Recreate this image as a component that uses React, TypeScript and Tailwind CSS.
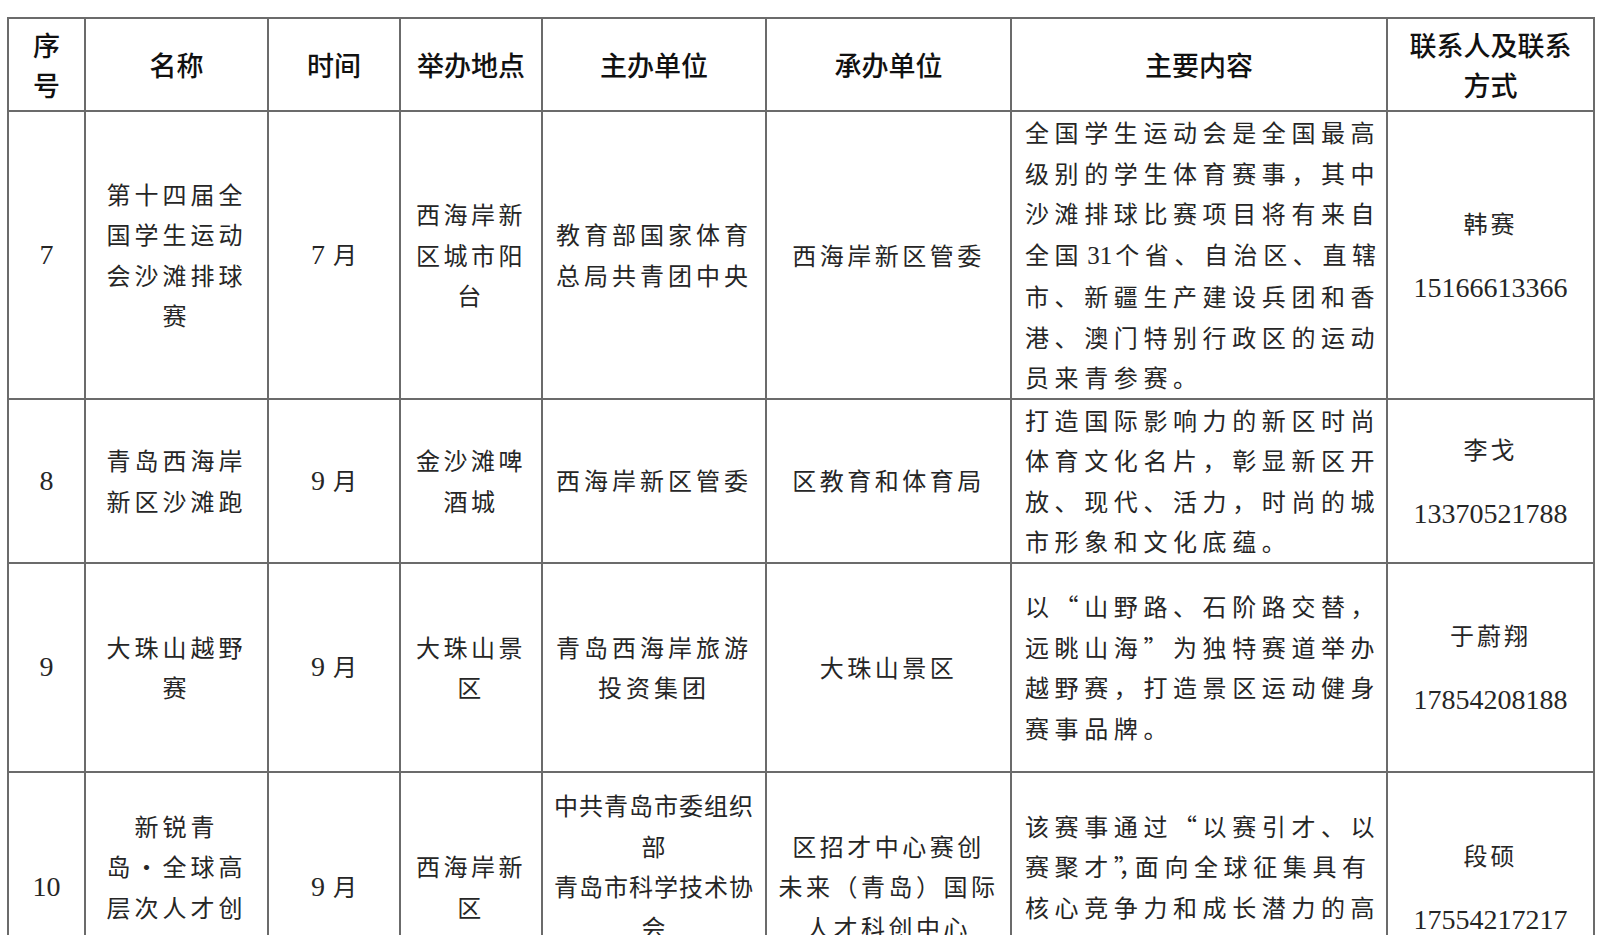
import type { ReactNode } from "react";

const cjk = "font-['Noto_Sans_CJK_SC',sans-serif]";
const num = "font-['Liberation_Serif',serif]";

type Row = {
  no: string;
  name: ReactNode[];
  month: string;
  place: string[];
  host: string[];
  hostTrack: string;
  org: string[];
  content: ReactNode[];
  person: string;
  phone: string;
  h: string;
};

const N = ({ children }: { children: ReactNode }) => (
  <span className={`${num} text-[25px] tracking-normal mx-[3px]`}>{children}</span>
);

// squeezed punctuation pair, so a 13-glyph line keeps the 12-glyph width
const P = ({ children }: { children: ReactNode }) => (
  <span className="tracking-[-7.5px]">{children}</span>
);

const rows: Row[] = [
  {
    no: "7",
    name: ["第十四届全", "国学生运动", "会沙滩排球", "赛"],
    month: "7",
    place: ["西海岸新", "区城市阳", "台"],
    host: ["教育部国家体育", "总局共青团中央"],
    hostTrack: "tracking-[4px]",
    org: ["西海岸新区管委"],
    content: [
      "全国学生运动会是全国最高",
      "级别的学生体育赛事，其中",
      "沙滩排球比赛项目将有来自",
      <>
        全国<N>31</N>个省、自治区、直辖
      </>,
      "市、新疆生产建设兵团和香",
      "港、澳门特别行政区的运动",
      "员来青参赛。",
    ],
    person: "韩赛",
    phone: "15166613366",
    h: "h-[285px]",
  },
  {
    no: "8",
    name: ["青岛西海岸", "新区沙滩跑"],
    month: "9",
    place: ["金沙滩啤", "酒城"],
    host: ["西海岸新区管委"],
    hostTrack: "tracking-[4px]",
    org: ["区教育和体育局"],
    content: [
      "打造国际影响力的新区时尚",
      "体育文化名片，彰显新区开",
      "放、现代、活力，时尚的城",
      "市形象和文化底蕴。",
    ],
    person: "李戈",
    phone: "13370521788",
    h: "h-[162px]",
  },
  {
    no: "9",
    name: ["大珠山越野", "赛"],
    month: "9",
    place: ["大珠山景", "区"],
    host: ["青岛西海岸旅游", "投资集团"],
    hostTrack: "tracking-[4px]",
    org: ["大珠山景区"],
    content: [
      "以“山野路、石阶路交替，",
      "远眺山海”为独特赛道举办",
      "越野赛，打造景区运动健身",
      "赛事品牌。",
    ],
    person: "于蔚翔",
    phone: "17854208188",
    h: "h-[209px]",
  },
  {
    no: "10",
    name: ["新锐青", "岛·全球高", "层次人才创", "新创业大赛"],
    month: "9",
    place: ["西海岸新", "区"],
    host: ["中共青岛市委组织", "部", "青岛市科学技术协", "会", "西海岸新区管委"],
    hostTrack: "tracking-[1px]",
    org: ["区招才中心赛创", "未来（青岛）国际", "人才科创中心"],
    content: [
      "该赛事通过“以赛引才、以",
      <>
        赛聚才<P>”，</P>面向全球征集具有
      </>,
      "核心竞争力和成长潜力的高",
      "层次人才创新创业项目。",
    ],
    person: "段硕",
    phone: "17554217217",
    h: "h-[230px]",
  },
];

const cell = "border-2 border-[#6b6b6b] align-middle p-0";

const Lines = ({ lines, className = "" }: { lines: ReactNode[]; className?: string }) => (
  <div className={`leading-[40.5px] whitespace-nowrap ${className}`}>
    {lines.map((l, i) => (
      <div key={i}>{l}</div>
    ))}
  </div>
);

const heads: ReactNode[] = [
  <>
    序<br />号
  </>,
  "名称",
  "时间",
  "举办地点",
  "主办单位",
  "承办单位",
  "主要内容",
  <>
    联系人及联系
    <br />
    方式
  </>,
];

export default function App() {
  return (
    <div className="min-h-screen bg-white pl-[7px] pt-[17px] text-[#262626]">
      <table className="table-fixed border-collapse w-[1588px]">
        <colgroup>
          <col className="w-[77px]" />
          <col className="w-[183px]" />
          <col className="w-[132px]" />
          <col className="w-[142px]" />
          <col className="w-[224px]" />
          <col className="w-[245px]" />
          <col className="w-[376px]" />
          <col className="w-[207px]" />
        </colgroup>
        <thead>
          <tr className="h-[93px]">
            {heads.map((h, i) => (
              <th
                key={i}
                className={`${cell} ${cjk} text-center text-[27px] font-medium leading-[40px] text-[#111]`}
              >
                {h}
              </th>
            ))}
          </tr>
        </thead>
        <tbody>
          {rows.map((r) => (
            <tr key={r.no} className={r.h}>
              <td className={`${cell} ${num} text-center text-[28px]`}>{r.no}</td>
              <td className={`${cell} ${cjk} text-center text-[24px] tracking-[4px]`}>
                <Lines lines={r.name} />
              </td>
              <td className={`${cell} ${cjk} text-center text-[24px]`}>
                <span className={`${num} text-[28px] mr-[8px]`}>{r.month}</span>月
              </td>
              <td className={`${cell} ${cjk} text-center text-[24px] tracking-[3.5px]`}>
                <Lines lines={r.place} />
              </td>
              <td className={`${cell} ${cjk} text-center text-[24px] ${r.hostTrack}`}>
                <Lines lines={r.host} />
              </td>
              <td className={`${cell} ${cjk} text-center text-[24px] tracking-[3.5px]`}>
                <Lines lines={r.org} />
              </td>
              <td className={`${cell} ${cjk} text-left text-[24px] tracking-[5.6px] pl-[13px]`}>
                <Lines lines={r.content} />
              </td>
              <td className={`${cell} text-center`}>
                <div className="flex flex-col items-center gap-[24px]">
                  <span className={`${cjk} text-[24px] tracking-[3px] leading-[41px]`}>{r.person}</span>
                  <span className={`${num} text-[28px] leading-[41px]`}>{r.phone}</span>
                </div>
              </td>
            </tr>
          ))}
        </tbody>
      </table>
    </div>
  );
}
